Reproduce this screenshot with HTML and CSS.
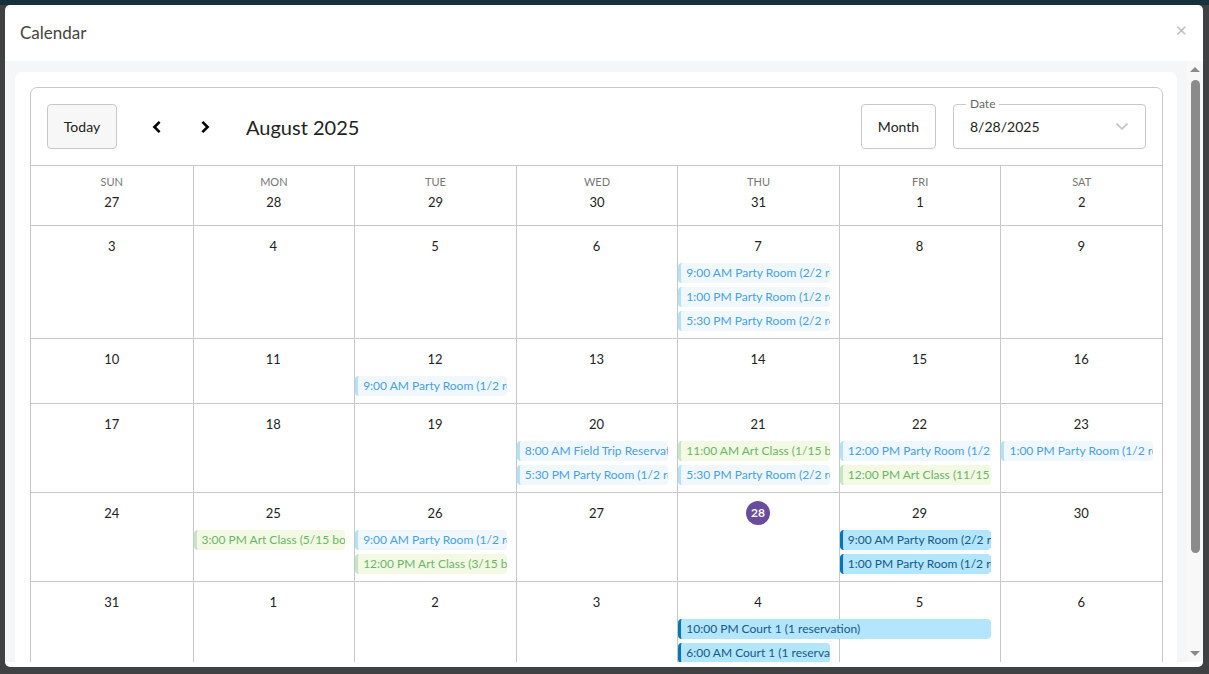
FILE: index.html
```html
<!DOCTYPE html>
<html lang="en">
<head>
<meta charset="utf-8">
<title>Calendar</title>
<link rel="stylesheet" href="styles.css">
</head>
<body>
<div class="topband"></div>
<div class="stage">
  <div class="dialog">
    <div class="dlg-head">
      <span class="dlg-title">Calendar</span>
      <span class="dlg-close">×</span>
    </div>
    <div class="dlg-body">
      <div class="scroll">
        <div class="card">
          <div class="cal">
            <div class="toolbar">
              <button class="btn btn-today">Today</button>
              <button class="nav nav-prev" aria-label="Previous">
                <svg width="14" height="14" viewBox="0 0 14 14"><path d="M9.6 1.8 L4.4 7 L9.6 12.2" fill="none" stroke="#000" stroke-width="2.6" stroke-linejoin="miter"/></svg>
              </button>
              <button class="nav nav-next" aria-label="Next">
                <svg width="14" height="14" viewBox="0 0 14 14"><path d="M4.4 1.8 L9.6 7 L4.4 12.2" fill="none" stroke="#000" stroke-width="2.6" stroke-linejoin="miter"/></svg>
              </button>
              <div class="cal-title">August 2025</div>
              <button class="btn btn-month">Month</button>
              <div class="datefield">
                <span class="df-label">Date</span>
                <span class="df-value">8/28/2025</span>
                <svg class="df-chev" width="14" height="9" viewBox="0 0 14 9"><path d="M1.5 1.5 L7 7 L12.5 1.5" fill="none" stroke="#c9c9c9" stroke-width="1.8"/></svg>
              </div>
            </div>

            <div class="dayhead">
              <div class="dh"><span class="dh-name">SUN</span><span class="dh-num">27</span></div>
              <div class="dh"><span class="dh-name">MON</span><span class="dh-num">28</span></div>
              <div class="dh"><span class="dh-name">TUE</span><span class="dh-num">29</span></div>
              <div class="dh"><span class="dh-name">WED</span><span class="dh-num">30</span></div>
              <div class="dh"><span class="dh-name">THU</span><span class="dh-num">31</span></div>
              <div class="dh"><span class="dh-name">FRI</span><span class="dh-num">1</span></div>
              <div class="dh"><span class="dh-name">SAT</span><span class="dh-num">2</span></div>
            </div>

            <!-- Week Aug 3 - 9 -->
            <div class="week w3">
              <div class="day c1"></div><div class="day c2"></div><div class="day c3"></div><div class="day c4"></div><div class="day c5"></div><div class="day c6"></div><div class="day c7"></div>
              <div class="num c1">3</div><div class="num c2">4</div><div class="num c3">5</div><div class="num c4">6</div><div class="num c5">7</div><div class="num c6">8</div><div class="num c7">9</div>
              <div class="ev party c5 r1"><span>9:00 AM Party Room (2/2 reservations)</span></div>
              <div class="ev party c5 r2"><span>1:00 PM Party Room (1/2 reservations)</span></div>
              <div class="ev party c5 r3"><span>5:30 PM Party Room (2/2 reservations)</span></div>
            </div>

            <!-- Week Aug 10 - 16 -->
            <div class="week w1">
              <div class="day c1"></div><div class="day c2"></div><div class="day c3"></div><div class="day c4"></div><div class="day c5"></div><div class="day c6"></div><div class="day c7"></div>
              <div class="num c1">10</div><div class="num c2">11</div><div class="num c3">12</div><div class="num c4">13</div><div class="num c5">14</div><div class="num c6">15</div><div class="num c7">16</div>
              <div class="ev party c3 r1"><span>9:00 AM Party Room (1/2 reservations)</span></div>
            </div>

            <!-- Week Aug 17 - 23 -->
            <div class="week w2">
              <div class="day c1"></div><div class="day c2"></div><div class="day c3"></div><div class="day c4"></div><div class="day c5"></div><div class="day c6"></div><div class="day c7"></div>
              <div class="num c1">17</div><div class="num c2">18</div><div class="num c3">19</div><div class="num c4">20</div><div class="num c5">21</div><div class="num c6">22</div><div class="num c7">23</div>
              <div class="ev party c4 r1"><span>8:00 AM Field Trip Reservation (2 reservations)</span></div>
              <div class="ev party c4 r2"><span>5:30 PM Party Room (1/2 reservations)</span></div>
              <div class="ev art c5 r1"><span>11:00 AM Art Class (1/15 bookings)</span></div>
              <div class="ev party c5 r2"><span>5:30 PM Party Room (2/2 reservations)</span></div>
              <div class="ev party c6 r1"><span>12:00 PM Party Room (1/2 reservations)</span></div>
              <div class="ev art c6 r2"><span>12:00 PM Art Class (11/15 bookings)</span></div>
              <div class="ev party c7 r1"><span>1:00 PM Party Room (1/2 reservations)</span></div>
            </div>

            <!-- Week Aug 24 - 30 -->
            <div class="week w2">
              <div class="day c1"></div><div class="day c2"></div><div class="day c3"></div><div class="day c4"></div><div class="day c5"></div><div class="day c6"></div><div class="day c7"></div>
              <div class="num c1">24</div><div class="num c2">25</div><div class="num c3">26</div><div class="num c4">27</div>
              <div class="num c5"><span class="today">28</span></div>
              <div class="num c6">29</div><div class="num c7">30</div>
              <div class="ev art c2 r1"><span>3:00 PM Art Class (5/15 bookings)</span></div>
              <div class="ev party c3 r1"><span>9:00 AM Party Room (1/2 reservations)</span></div>
              <div class="ev art c3 r2"><span>12:00 PM Art Class (3/15 bookings)</span></div>
              <div class="ev court c6 r1"><span>9:00 AM Party Room (2/2 reservations)</span></div>
              <div class="ev court c6 r2"><span>1:00 PM Party Room (1/2 reservations)</span></div>
            </div>

            <!-- Week Aug 31 - Sep 6 -->
            <div class="week w2">
              <div class="day c1"></div><div class="day c2"></div><div class="day c3"></div><div class="day c4"></div><div class="day c5"></div><div class="day c6"></div><div class="day c7"></div>
              <div class="num c1">31</div><div class="num c2">1</div><div class="num c3">2</div><div class="num c4">3</div><div class="num c5">4</div><div class="num c6">5</div><div class="num c7">6</div>
              <div class="ev court c5 span2 r1"><span>10:00 PM Court 1 (1 reservation)</span></div>
              <div class="ev court c5 r2"><span>6:00 AM Court 1 (1 reservation)</span></div>
            </div>
          </div>
        </div>
      </div>
      <div class="sbar">
        <span class="sb-up"></span>
        <span class="sb-track"><span class="sb-thumb"></span></span>
        <span class="sb-down"></span>
      </div>
    </div>
  </div>
</div>
</body>
</html>
```

FILE: styles.css
```css
* { box-sizing: border-box; }

html, body {
  margin: 0;
  height: 100%;
}

body {
  background: #404142;
  font-family: Lato, "Noto Sans", "Liberation Sans", sans-serif;
  color: #222;
  overflow: hidden;
}

.topband {
  height: 5px;
  background: #16303c;
}

.stage {
  padding: 0 6px 0 5px;
}

.dialog {
  height: 662px;
  background: #fff;
  border-radius: 5px;
  display: flex;
  flex-direction: column;
  padding-bottom: 5px;
  overflow: hidden;
}

.dlg-head {
  height: 56px;
  flex: none;
  display: flex;
  align-items: center;
  justify-content: space-between;
  padding: 0 16px 2px 15px;
}

.dlg-title {
  font-size: 17px;
  color: #444;
}

.dlg-close {
  font-size: 20px;
  color: #bdbdbd;
  margin-top: -6px;
}

.dlg-body {
  flex: 1;
  min-height: 0;
  display: flex;
  background: #f5f6f8;
}

.scroll {
  flex: 1;
  min-width: 0;
  overflow: hidden;
  padding: 11px 10px 0 10px;
}

.card {
  background: #fff;
  border-radius: 8px;
  padding: 15px 14px 15px 15px;
}

.cal {
  border: 1px solid #c8c8c8;
  border-radius: 7px;
}

/* toolbar */
.toolbar {
  display: flex;
  align-items: center;
  padding: 16px;
  border-bottom: 1px solid #c8c8c8;
}

.btn {
  font-family: inherit;
  height: 45px;
  border: 1px solid #c8c8c8;
  border-radius: 4px;
  background: #fff;
  font-size: 14px;
  color: #222;
  padding: 0;
}

.btn-today {
  width: 70px;
  background: #f7f7f7;
}

.btn-month {
  width: 75px;
  margin-left: auto;
}

.nav {
  width: 32px;
  height: 32px;
  border: none;
  background: transparent;
  padding: 0;
  display: flex;
  align-items: center;
  justify-content: center;
}

.nav-prev { margin-left: 24px; }
.nav-next { margin-left: 16px; }

.cal-title {
  margin-left: 25px;
  font-size: 20px;
  color: #222;
}

.datefield {
  position: relative;
  margin-left: 17px;
  width: 193px;
  height: 45px;
  border: 1px solid #c8c8c8;
  border-radius: 4px;
  display: flex;
  align-items: center;
  justify-content: space-between;
  padding: 0 16px;
}

.df-label {
  position: absolute;
  top: -9px;
  left: 12px;
  padding: 0 4px;
  background: #fff;
  font-size: 12px;
  color: #666;
  line-height: 16px;
}

.df-value {
  font-size: 14px;
  color: #222;
}

/* day header */
.dayhead {
  display: grid;
  grid-template-columns: repeat(7, 1fr);
  border-bottom: 1px solid #c8c8c8;
}

.dh {
  height: 59px;
  border-left: 1px solid #c8c8c8;
  display: flex;
  flex-direction: column;
  align-items: center;
  padding-top: 9px;
}

.dh:first-child { border-left: none; }

.dh-name {
  font-size: 11px;
  line-height: 14px;
  color: #767676;
}

.dh-num {
  margin-top: 3px;
  font-size: 13px;
  line-height: 20px;
  color: #222;
}

/* weeks */
.week {
  display: grid;
  grid-template-columns: repeat(7, 1fr);
  border-bottom: 1px solid #c8c8c8;
}

.w1 { grid-template-rows: 37px 24px 3px; }
.w2 { grid-template-rows: 37px 24px 24px 3px; }
.w3 { grid-template-rows: 37px 24px 24px 24px 3px; }

.day {
  grid-row: 1 / -1;
  border-left: 1px solid #c8c8c8;
}

.day.c1 { border-left: none; }

.c1 { grid-column: 1; }
.c2 { grid-column: 2; }
.c3 { grid-column: 3; }
.c4 { grid-column: 4; }
.c5 { grid-column: 5; }
.c6 { grid-column: 6; }
.c7 { grid-column: 7; }
.c5.span2 { grid-column: 5 / span 2; }

.r1 { grid-row: 2; }
.r2 { grid-row: 3; }
.r3 { grid-row: 4; }

.num {
  grid-row: 1;
  display: flex;
  justify-content: center;
  padding-top: 9px;
  font-size: 13px;
  line-height: 22px;
  color: #222;
}

.today {
  display: block;
  width: 24px;
  height: 24px;
  margin-top: -1px;
  border-radius: 50%;
  background: #6a4c9c;
  color: #fff;
  font-size: 12px;
  font-weight: 700;
  line-height: 24px;
  text-align: center;
}

.ev {
  height: 20px;
  margin: 0 9px 4px 1px;
  padding-left: 5px;
  border-left: 3px solid;
  border-radius: 4px;
  font-size: 12px;
  line-height: 20px;
  white-space: nowrap;
  overflow: hidden;
  text-overflow: clip;
}

.ev span {
  display: block;
  overflow: hidden;
}

.party {
  background: #f0f8fe;
  border-left-color: #b3e1fa;
  color: #45a1e6;
}

.art {
  background: #f4f9e4;
  border-left-color: #c6e4c6;
  color: #66b868;
}

.court {
  background: #b3e5fc;
  border-left-color: #0277bd;
  color: #145a8a;
}

/* scrollbar */
.sbar {
  width: 16px;
  flex: none;
  background: #f8f8f9;
  display: flex;
  flex-direction: column;
  align-items: center;
}

.sb-up, .sb-down {
  width: 0;
  height: 0;
  border-left: 5px solid transparent;
  border-right: 5px solid transparent;
  flex: none;
}

.sb-up {
  margin-top: 6px;
  border-bottom: 5px solid #8a8a8a;
}

.sb-down {
  margin-bottom: 6px;
  border-top: 5px solid #8a8a8a;
}

.sb-track {
  flex: 1;
  width: 100%;
  padding: 8px 0 0 4px;
}

.sb-thumb {
  display: block;
  width: 9px;
  height: 473px;
  border-radius: 5px;
  background: #8b8b8b;
}
```
